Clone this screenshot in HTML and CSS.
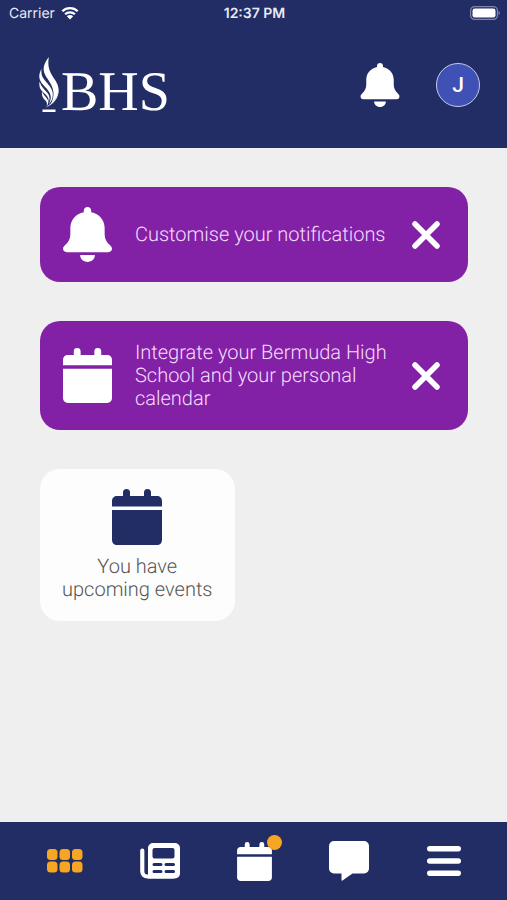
FILE: index.html
```html
<!DOCTYPE html>
<html lang="en">
<head>
<meta charset="utf-8">
<meta name="viewport" content="width=device-width, initial-scale=1">
<title>BHS</title>
<link rel="stylesheet" href="styles.css">
</head>
<body>
<svg class="defs" width="0" height="0" aria-hidden="true">
  <symbol id="bell" viewBox="0 0 50 56">
    <path d="M25 0c2.200 0 3.800 1.600 3.800 3.700v1.500C37 6.900 42.500 13 42.500 21.500v6c0 4.500 1.500 8 5.500 11.500 1.200 1.100 2 2.300 2 3.600 0 2-1.700 3.400-4 3.400H4c-2.300 0-4-1.400-4-3.400 0-1.300.8-2.500 2-3.600 4-3.500 5.500-7 5.500-11.500v-6C7.500 13 13 6.900 21.200 5.200V3.700C21.200 1.600 22.800 0 25 0z"/>
    <path d="M17.500 49h15c0 4-3.200 7-7.500 7s-7.500-3-7.500-7z"/>
  </symbol>
  <symbol id="calendar" viewBox="0 0 50 56">
    <path d="M0 17.500V12c0-3 2.200-5 5-5h6V3.500a3.500 3.500 0 0 1 7 0V7h14V3.500a3.500 3.500 0 0 1 7 0V7h6c2.800 0 5 2 5 5v5.500z"/>
    <path d="M0 21h50v30c0 3-2.200 5-5 5H5c-2.800 0-5-2-5-5z"/>
  </symbol>
  <symbol id="cross" viewBox="0 0 28 28">
    <path d="M3 3l22 22M25 3L3 25" fill="none" stroke="currentColor" stroke-width="5.500" stroke-linecap="round"/>
  </symbol>
</svg>

<header class="top">
  <div class="status">
    <div class="carrier">
      <span>Carrier</span>
      <svg class="wifi" viewBox="0 0 18 14" aria-hidden="true">
        <path d="M1.300 5.300a11 11 0 0 1 15.400 0M4.100 8.300a7 7 0 0 1 9.800 0" fill="none" stroke="currentColor" stroke-width="2.300"/>
        <path d="M5.800 10.200a4.600 4.600 0 0 1 6.400 0L9 13.600z"/>
      </svg>
    </div>
    <time class="clock">12:37 PM</time>
    <svg class="battery" viewBox="0 0 30 14" aria-label="Battery full">
      <rect x=".6" y=".6" width="26.800" height="12.800" rx="4" fill="none" stroke="#8084aa" stroke-width="1.200"/>
      <rect x="2.500" y="2.500" width="23" height="9" rx="2.200"/>
      <path d="M28.500 5c1.800.6 1.800 3.400 0 4z" fill="#8084aa"/>
    </svg>
  </div>
  <div class="bar">
    <a class="logo" href="#">
      <svg class="flame" viewBox="0 0 20 56" aria-hidden="true">
        <path d="M9.800 0C4.500 7 3.500 12 6 17.500c2.200 5 8 10 8.500 18.500.2 4-1 7.500-2.500 10.500 4-3.500 7.500-8 7.500-14 0-5.500-3.300-9-6-13.500C10.200 13.500 8.500 9 9.800 0z"/>
        <path d="M2.600 11.500C-.5 17.500-.3 21 2 25c2.600 4.400 9.200 8.400 9.700 14.500.2 3-.7 5.500-2.200 8 3.200-3 4.500-6.500 4.300-10.500-.3-6-4.600-9.500-7.800-13.500C3.300 20.200 1.700 17 2.600 11.500z"/>
        <path d="M.7 24.500c-1.200 5.500.8 8.500 4 11.200C8 38.500 10.500 41 9.300 45.500c1.700-3 1.600-6-.1-8.500C6.700 33.200 2 30.500.7 24.500z"/>
        <path d="M3 34.500c-.6 4.500 1.200 6.700 3.200 8.700 1.600 1.600 2.500 3.500 1.300 6.300 2-2.300 2.300-4.800.9-7.200C7 39.800 4.300 38 3 34.500z"/>
        <path d="M19.400 30c.6 8-3.600 14.500-12.900 20.500C16 47 21 39 19.400 30z"/>
        <path d="M3.500 52.500h13V55h-13z"/>
      </svg>
      <span>BHS</span>
    </a>
    <button class="plain alerts" aria-label="Notifications"><svg viewBox="0 0 50 56"><use href="#bell"/></svg></button>
    <button class="avatar" aria-label="Profile J">J</button>
  </div>
</header>

<main class="content">
  <section class="notice">
    <svg class="picture" viewBox="0 0 50 56" aria-hidden="true"><use href="#bell"/></svg>
    <p>Customise your notifications</p>
    <button class="plain close" aria-label="Dismiss"><svg viewBox="0 0 28 28"><use href="#cross"/></svg></button>
  </section>
  <section class="notice">
    <svg class="picture" viewBox="0 0 50 56" aria-hidden="true"><use href="#calendar"/></svg>
    <p>Integrate your Bermuda High School and your personal calendar</p>
    <button class="plain close" aria-label="Dismiss"><svg viewBox="0 0 28 28"><use href="#cross"/></svg></button>
  </section>
  <div class="tiles">
    <a class="tile" href="#">
      <svg class="picture" viewBox="0 0 50 56" aria-hidden="true"><use href="#calendar"/></svg>
      <span>You have upcoming events</span>
    </a>
  </div>
</main>

<nav class="tabs">
  <a class="active" href="#" aria-label="Home">
    <svg width="36" height="24" viewBox="0 0 36 24"><rect x="0" y="0" width="10.500" height="11" rx="3.500"/><rect x="12.500" y="0" width="10.500" height="11" rx="3.500"/><rect x="25" y="0" width="10.500" height="11" rx="3.500"/><rect x="0" y="12.500" width="10.500" height="11" rx="3.500"/><rect x="12.500" y="12.500" width="10.500" height="11" rx="3.500"/><rect x="25" y="12.500" width="10.500" height="11" rx="3.500"/></svg>
  </a>
  <a href="#" aria-label="News">
    <svg width="40" height="36" viewBox="0 0 40 36"><path d="M2.300 7.500V28.500a5 5 0 0 0 5 5H33" fill="none" stroke="currentColor" stroke-width="4.200" stroke-linecap="round"/><path fill-rule="evenodd" d="M13 0h22a5 5 0 0 1 5 5v25.500a5 5 0 0 1-5 5H8V5a5 5 0 0 1 5-5zM14.500 5a2 2 0 0 0-2 2v6.500a2 2 0 0 0 2 2h18a2 2 0 0 0 2-2V7a2 2 0 0 0-2-2zM14 20a1.200 1.200 0 0 0 0 3h7a1.200 1.200 0 0 0 0-3zM26 20a1.200 1.200 0 0 0 0 3h7.500a1.200 1.200 0 0 0 0-3zM14 27a1.200 1.200 0 0 0 0 3h7a1.200 1.200 0 0 0 0-3zM26 27a1.200 1.200 0 0 0 0 3h7.500a1.200 1.200 0 0 0 0-3z"/><path d="M6.200 5v24" stroke="#222d65" stroke-width="2.600" stroke-linecap="round"/></svg>
  </a>
  <a href="#" aria-label="Calendar, new events">
    <span class="badged"><svg width="35" height="39" viewBox="0 0 50 56"><use href="#calendar"/></svg><i class="dot"></i></span>
  </a>
  <a href="#" aria-label="Messages">
    <svg width="40" height="40" viewBox="0 0 40 40"><path d="M5 0h30a5 5 0 0 1 5 5v22.500a5 5 0 0 1-5 5H23.500L13.500 39.500c-.5.400-1 .1-1-.5v-6.500H5a5 5 0 0 1-5-5V5a5 5 0 0 1 5-5z"/></svg>
  </a>
  <a href="#" aria-label="Menu">
    <svg width="34" height="30" viewBox="0 0 34 30"><path d="M2.700 2.700h28.600M2.700 15h28.600M2.700 27.300h28.600" fill="none" stroke="currentColor" stroke-width="5.400" stroke-linecap="round"/></svg>
  </a>
</nav>
</body>
</html>
```

FILE: styles.css
```css
* {
  box-sizing: border-box;
}

body {
  margin: 0;
  min-height: 100vh;
  display: flex;
  flex-direction: column;
  background: #efefef;
  font-family: Roboto, "Liberation Sans", sans-serif;
  text-rendering: geometricPrecision;
}

svg {
  display: block;
  fill: currentColor;
}

.defs {
  position: absolute;
}

a {
  color: inherit;
  text-decoration: none;
}

.plain {
  border: 0;
  padding: 0;
  background: none;
  color: inherit;
}

.top,
.tabs {
  background: #222d65;
  color: #fff;
}

.status {
  display: grid;
  grid-template-columns: 1fr auto 1fr;
  align-items: center;
  height: 26px;
  padding: 0 7px 0 9px;
  font-family: Inter, sans-serif;
  font-size: 14px;
  color: #e8eaf4;
}

.carrier {
  display: flex;
  align-items: center;
  gap: 6px;
}

.wifi {
  width: 18px;
  height: 14px;
  color: #fff;
}

.clock {
  font-weight: 600;
}

.battery {
  width: 30px;
  height: 14px;
  justify-self: end;
  color: #fff;
}

.bar {
  display: flex;
  align-items: center;
  height: 122px;
  padding: 0 27px 4px 39px;
}

.logo {
  display: flex;
  align-items: flex-end;
  gap: 2px;
  margin-right: auto;
  font-family: "Liberation Serif", serif;
  font-size: 56px;
  line-height: 42px;
}

.flame {
  width: 20px;
  height: 56px;
}

.alerts svg {
  width: 40px;
  height: 44px;
}

.avatar {
  width: 44px;
  height: 44px;
  margin-left: 36px;
  padding: 0;
  border: 1px solid #c5cae9;
  border-radius: 50%;
  background: #3f51b5;
  color: #fff;
  font: 500 21px Roboto, sans-serif;
}

.content {
  flex: 1;
  display: flex;
  flex-direction: column;
  gap: 39px;
  padding: 39px 39px 39px 40px;
  font-size: 20px;
  font-weight: 300;
  line-height: 23px;
}

.notice {
  display: flex;
  align-items: center;
  gap: 23px;
  padding: 20px 28px 20px 23px;
  border-radius: 20px;
  background: #8321a6;
  color: #fff;
}

.notice p {
  flex: 1;
  margin: 0;
  color: #f5dcff;
}

.picture {
  flex: none;
  width: 50px;
  height: 56px;
}

.notice .picture {
  width: 49px;
  height: 55px;
}

.close svg {
  width: 28px;
  height: 28px;
}

.tiles {
  display: grid;
  grid-template-columns: 1fr 1fr;
  gap: 39px;
}

.tile {
  display: flex;
  flex-direction: column;
  align-items: center;
  gap: 10px;
  padding: 20px;
  border-radius: 20px;
  background: #fdfdfd;
  color: #555;
  text-align: center;
}

.tile .picture {
  color: #222d65;
}

.tabs {
  display: grid;
  grid-template-columns: repeat(5, 1fr);
  height: 78px;
  padding: 0 16px 0 18px;
}

.tabs a {
  display: flex;
  align-items: center;
  justify-content: center;
}

.tabs .active {
  color: #f6a623;
}

.badged {
  position: relative;
}

.dot {
  position: absolute;
  top: -7px;
  right: -10px;
  width: 15px;
  height: 15px;
  border-radius: 50%;
  background: #f6a623;
}
```
